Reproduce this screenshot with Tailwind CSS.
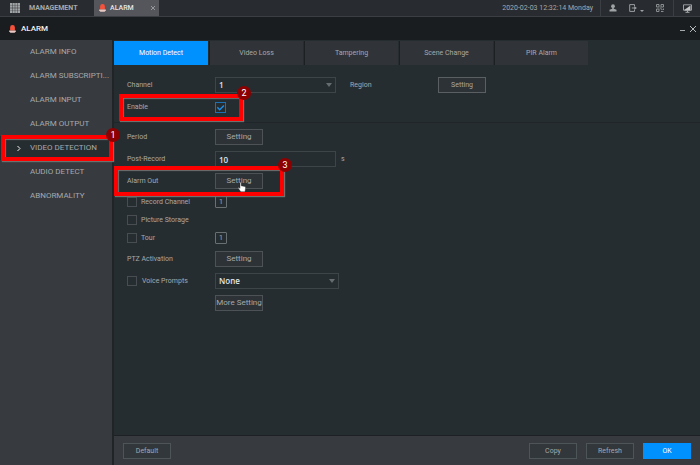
<!DOCTYPE html>
<html lang="en">
<head>
  <meta charset="UTF-8" />
  <meta name="viewport" content="width=device-width, initial-scale=1.0" />
  <title>Alarm - Video Detection</title>
  <script src="https://cdn.jsdelivr.net/npm/@tailwindcss/browser@4"></script>
</head>
<body class="min-h-screen flex flex-col bg-[#262d31] text-[#a6a9ab] font-['Roboto','Liberation_Sans',sans-serif] text-[7px] leading-[10px]">

  <!-- Top bar -->
  <header class="h-[17px] flex items-stretch bg-[#282b2f] border-b border-[#3b3e42]">
    <nav class="flex items-stretch">
      <a href="#" class="w-[94px] pl-[10px] flex items-center gap-[9px] font-bold">
        <svg class="size-[10px]" viewBox="0 0 10 10" fill="#a0a3a5">
          <path d="M0 0h2.2v2.2H0zM2.6 0h2.200v2.200H2.600zM5.200 0h2.200v2.200H5.200zM7.800 0H10v2.200H7.800zM0 2.600h2.200v2.200H0zM2.600 2.600h2.200v2.200H2.600zM5.200 2.600h2.200v2.200H5.200zM7.800 2.600H10v2.200H7.800zM0 5.200h2.200v2.200H0zM2.600 5.200h2.200v2.200H2.600zM5.200 5.200h2.200v2.200H5.200zM7.800 5.200H10v2.200H7.800zM0 7.800h2.200V10H0zM2.600 7.800h2.200V10H2.600zM5.200 7.800h2.200V10H5.200zM7.800 7.800H10V10H7.800z"/>
        </svg>
        MANAGEMENT
      </a>
      <div class="w-[65px] pl-[5px] pr-1 flex items-center gap-1 bg-[#54565b] text-[#e6e6e7]">
        <svg class="w-[7px] h-[8px]" viewBox="0 0 7 8"><path d="M1.100 5.600V2.400a2.400 2.300 0 0 1 4.800 0v3.200z" fill="#f4523b"/><path d="M.2 5.500h6.600v1L5.600 7.800H1.400L.2 6.500z" fill="#e8c9c4"/></svg>
        <span class="font-medium">ALARM</span>
        <button class="ml-auto" aria-label="Close tab">
          <svg class="size-[4px]" viewBox="0 0 4 4" stroke="#a6a8ab" stroke-width=".8"><path d="M0 0l4 4M4 0L0 4"/></svg>
        </button>
      </div>
    </nav>
    <div class="ml-auto flex items-stretch">
      <time class="pr-[7px] flex items-center">2020-02-03 12:32:14 Monday</time>
      <div class="w-[73px] pl-2 pr-[9px] flex items-center justify-between border-l border-[#3b3e42]">
        <button aria-label="User">
          <svg class="size-[8px]" viewBox="0 0 8 8" fill="#a0a3a5"><circle cx="4" cy="2.200" r="1.900"/><path d="M3.200 3.500h1.600v1.200l2.700 1V7.500h-7V5.700l2.700-1z"/></svg>
        </button>
        <button class="flex items-end gap-[3px]" aria-label="Log out">
          <svg class="size-[8px]" viewBox="0 0 8 8" fill="none" stroke="#9a9da0"><path d="M5.500 2.200V.6H.7v6.800h4.800V5.800"/><path d="M2.800 4H6"/><path d="M5.200 2L7.900 4 5.200 6z" fill="#9a9da0" stroke="none"/></svg>
          <svg class="w-[4px] h-[2px]" viewBox="0 0 4 2" fill="#a0a3a5"><path d="M0 0h4L2 2z"/></svg>
        </button>
        <button aria-label="QR code">
          <svg class="size-[8px]" viewBox="0 0 8 8" fill="none" stroke="#8b8e91"><path d="M.5.5h2.500v2.500H.5zM5 .5h2.500v2.500H5zM.5 5h2.500v2.500H.5zM4.700 5h1.300v1.200M7.500 4.500v1.500M5 7.500h2.500M3.500 4h1.500"/></svg>
        </button>
      </div>
      <button class="w-[27px] flex items-center justify-center border-l border-[#3b3e42]" aria-label="Display">
        <svg class="size-[9px]" viewBox="0 0 9 9"><path d="M.5.8h8v5.400h-8z" fill="none" stroke="#a6a9ab" stroke-width=".9"/><path d="M1.500 5.800L7.500 1.500v5h-6z" fill="#c4c6c8"/><path d="M2.500 8.300h4M4.500 6v2" stroke="#a6a9ab"/></svg>
      </button>
    </div>
  </header>

  <!-- Window title -->
  <div class="h-[23px] pl-[9px] pr-1 flex items-center gap-[5px] bg-[#1a1d20]">
    <svg class="w-[7px] h-[8px]" viewBox="0 0 7 8"><path d="M1.100 5.600V2.400a2.400 2.300 0 0 1 4.800 0v3.200z" fill="#f4523b"/><path d="M.2 5.500h6.600v1L5.600 7.800H1.400L.2 6.500z" fill="#e8c9c4"/></svg>
    <h1 class="text-[8px] font-medium text-[#f0f0f0]">ALARM</h1>
    <button class="ml-auto" aria-label="Minimize">
      <svg class="w-[5px] h-[7px]" viewBox="0 0 5 7" stroke="#a6a9ab"><path d="M0 5.500h5"/></svg>
    </button>
    <button aria-label="Close">
      <svg class="size-[6px]" viewBox="0 0 6 6" stroke="#b4b6b8"><path d="M0 0l6 6M6 0L0 6"/></svg>
    </button>
  </div>

  <div class="flex-1 flex">

    <!-- Side menu -->
    <nav class="w-[114px] shrink-0 bg-[#373a3f] border-r-2 border-[#202427] text-[8px]">
      <a href="#" class="h-6 pl-[30px] flex items-center">ALARM INFO</a>
      <a href="#" class="h-6 pl-[30px] flex items-center whitespace-nowrap">ALARM SUBSCRIPTI...</a>
      <a href="#" class="h-6 pl-[30px] flex items-center">ALARM INPUT</a>
      <a href="#" class="h-6 pl-[30px] flex items-center">ALARM OUTPUT</a>
      <a href="#" class="relative h-6 pl-4 flex items-center gap-[9px] bg-[#262d31]" aria-current="page">
        <svg class="size-[5px]" viewBox="0 0 5 5" fill="none" stroke="#f0f0f0"><path d="M1.500 0L4 2.500 1.500 5"/></svg>
        VIDEO DETECTION
        <span class="absolute -inset-y-px left-px -right-px border-4 border-[#fe0000] shadow-[1px_1px_1px_#70706f,inset_1px_1px_1px_#70706f] z-10"></span>
        <span class="absolute -right-2 -top-2 z-20 size-[14px] rounded-full bg-[#8b0000] text-[9px] text-white flex items-center justify-center">1</span>
      </a>
      <a href="#" class="h-6 pl-[30px] flex items-center">AUDIO DETECT</a>
      <a href="#" class="h-6 pl-[30px] flex items-center">ABNORMALITY</a>
    </nav>

    <main class="flex-1 flex flex-col">
      <!-- Tabs -->
      <div class="flex gap-px h-[25px] pt-px">
        <button class="w-[94px] bg-[#0091ff] text-white">Motion Detect</button>
        <button class="w-[94px] border-l border-[#1c2023] bg-[#303338]">Video Loss</button>
        <button class="w-[94px] border-l border-[#1c2023] bg-[#303338]">Tampering</button>
        <button class="w-[94px] border-l border-[#1c2023] bg-[#303338]">Scene Change</button>
        <button class="w-[94px] border-l border-[#1c2023] bg-[#303338]">PIR Alarm</button>
      </div>

      <form class="flex-1">
        <section class="pl-[13px] pt-[9px] pb-1 border-b border-[#1f2529]">
          <div class="h-[22px] flex items-center">
            <label for="channel" class="w-[88px]">Channel</label>
            <div class="relative w-[121px]">
              <select id="channel" class="block w-full h-4 px-[3px] appearance-none bg-transparent border border-[#3e4549] font-['Open_Sans',sans-serif] text-[8px] leading-[14px] font-semibold text-[#e4e5e6]">
                <option>1</option>
              </select>
              <svg class="absolute right-1 top-[6px] w-[6px] h-[4px] pointer-events-none" viewBox="0 0 6 4" fill="#666c70"><path d="M0 0h6L3 4z"/></svg>
            </div>
            <span class="w-[88px] ml-[14px]">Region</span>
            <button type="button" class="w-12 h-4 bg-[#2d3236] border border-[#5a5f62]">Setting</button>
          </div>
          <div class="relative h-[22px] flex items-center">
            <label for="enable" class="w-[88px]">Enable</label>
            <input id="enable" type="checkbox" checked class="peer size-[11px] appearance-none border border-[#1d70b4]" />
            <svg class="-ml-[10px] size-[9px] pointer-events-none" viewBox="0 0 9 9" fill="none" stroke="#1d8fe8" stroke-width="1.400"><path d="M1.300 4.300l2.400 2.400L7.900 2.500"/></svg>
            <span class="absolute -left-2 -top-[2px] w-[124px] h-[27px] border-4 border-[#fe0000] shadow-[1px_1px_1px_#70706f,inset_1px_1px_1px_#70706f]"></span>
            <span class="absolute left-[110px] -top-[10px] size-[14px] rounded-full bg-[#8b0000] text-[9px] text-white flex items-center justify-center">2</span>
          </div>
        </section>

        <section class="pl-[13px] pt-[3px]">
          <div class="h-[22px] flex items-center">
            <span class="w-[88px]">Period</span>
            <button type="button" class="w-12 h-4 bg-[#2d3236] border border-[#4c5255] text-[8px]">Setting</button>
          </div>
          <div class="h-[22px] flex items-center">
            <label for="postRecord" class="w-[88px]">Post-Record</label>
            <input id="postRecord" type="text" value="10" class="w-[121px] h-4 px-[3px] bg-transparent border border-[#3e4549] font-['Open_Sans',sans-serif] text-[8px] leading-[14px] font-semibold text-[#e4e5e6]" />
            <span class="ml-[5px]">s</span>
          </div>
          <div class="relative h-[22px] flex items-center">
            <span class="w-[88px]">Alarm Out</span>
            <button type="button" class="w-12 h-4 bg-[#2d3236] border border-[#4c5255] text-[8px]">Setting</button>
            <span class="absolute -left-[13px] -top-1 w-[170px] h-[30px] border-4 border-[#fe0000] shadow-[1px_1px_1px_#70706f,inset_1px_1px_1px_#70706f] z-10"></span>
            <span class="absolute left-[151px] -top-3 z-20 size-[14px] rounded-full bg-[#8b0000] text-[9px] text-white flex items-center justify-center">3</span>
            <!-- pointer -->
            <svg class="absolute left-[111px] top-3 z-20 w-[8px] h-[10px]" viewBox="0 0 8 10" fill="#fff" stroke="#222" stroke-width=".4"><path d="M2 .8c0-.8 1.200-.8 1.200 0v3l3.600.8c.7.200.9.700.8 1.300L7 9.800H2.800L.4 6.500c-.4-.7.4-1.200 1-.7l.6.600z"/></svg>
          </div>
          <div class="py-px">
            <div class="h-[18px] flex items-center">
              <div class="w-[88px] flex items-center gap-1">
                <input id="recordChannel" type="checkbox" class="size-[10px] appearance-none border border-[#474d51]" />
                <label for="recordChannel">Record Channel</label>
              </div>
              <button type="button" class="size-3 border border-[#6a6f72] rounded-[1px] leading-none">1</button>
            </div>
            <div class="h-[18px] flex items-center gap-1">
              <input id="pictureStorage" type="checkbox" class="size-[10px] appearance-none border border-[#474d51]" />
              <label for="pictureStorage">Picture Storage</label>
            </div>
            <div class="h-[18px] flex items-center">
              <div class="w-[88px] flex items-center gap-1">
                <input id="tour" type="checkbox" class="size-[10px] appearance-none border border-[#474d51]" />
                <label for="tour">Tour</label>
              </div>
              <button type="button" class="size-3 border border-[#6a6f72] rounded-[1px] leading-none">1</button>
            </div>
          </div>
          <div class="h-[22px] flex items-center">
            <span class="w-[88px]">PTZ Activation</span>
            <button type="button" class="w-12 h-4 bg-[#2d3236] border border-[#4c5255] text-[8px]">Setting</button>
          </div>
          <div class="h-[22px] flex items-center">
            <div class="w-[88px] flex items-center gap-[5px]">
              <input id="voicePrompts" type="checkbox" class="size-[10px] appearance-none border border-[#474d51]" />
              <label for="voicePrompts">Voice Prompts</label>
            </div>
            <div class="relative w-[124px]">
              <select class="block w-full h-4 px-[3px] appearance-none bg-transparent border border-[#3e4549] font-['Open_Sans',sans-serif] text-[8px] leading-[14px] font-semibold text-[#e4e5e6]" aria-label="Voice prompt file">
                <option>None</option>
              </select>
              <svg class="absolute right-1 top-[6px] w-[6px] h-[4px] pointer-events-none" viewBox="0 0 6 4" fill="#666c70"><path d="M0 0h6L3 4z"/></svg>
            </div>
          </div>
          <div class="h-[22px] pl-[88px] flex items-center">
            <button type="button" class="w-12 h-4 bg-[#2d3236] border border-[#4c5255] whitespace-nowrap text-[8px]">More Setting</button>
          </div>
        </section>
      </form>

      <!-- Actions -->
      <footer class="h-[30px] pl-[9px] pr-[9px] flex items-center gap-[9px] bg-[#373a3f] border-t border-[#1e2124]">
        <button class="w-12 h-4 bg-[#31373a] border border-[#4d5558]">Default</button>
        <button class="w-12 h-4 ml-auto bg-[#31373a] border border-[#4d5558]">Copy</button>
        <button class="w-12 h-4 bg-[#31373a] border border-[#4d5558]">Refresh</button>
        <button class="w-12 h-4 bg-[#0091ff] text-white">OK</button>
      </footer>
    </main>
  </div>

</body>
</html>
